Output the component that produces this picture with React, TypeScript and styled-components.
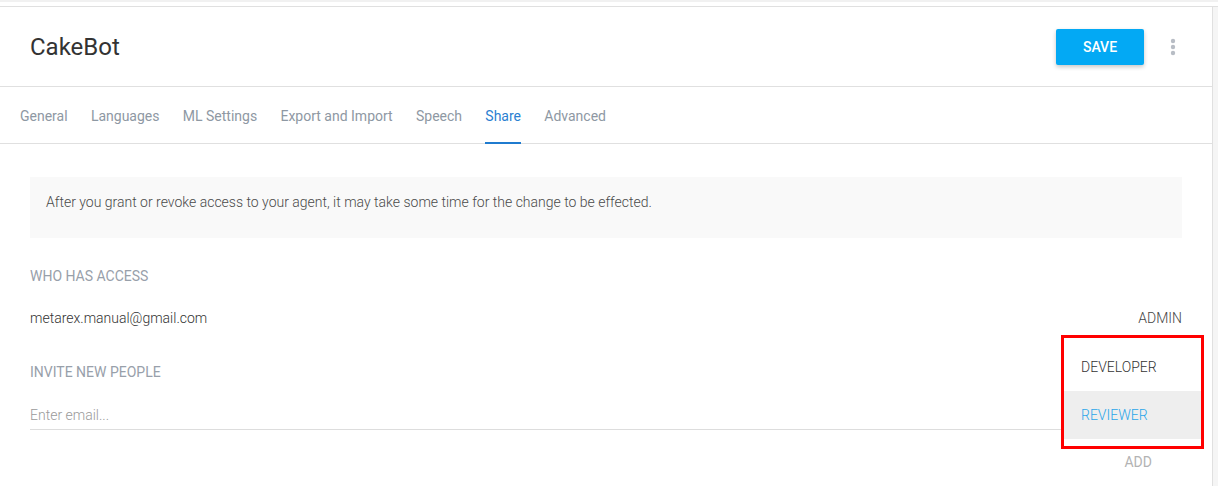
import React from "react";
import styled, { createGlobalStyle } from "styled-components";

const GlobalStyle = createGlobalStyle`
  html, body { margin: 0; padding: 0; background: #ffffff; }
  body { font-family: Roboto, "Liberation Sans", Arial, sans-serif; }
  * { box-sizing: border-box; }
`;

const Page = styled.div`
  border-top: 2px solid #f1f1f1;
  padding-top: 4px;
  background: #ffffff;
`;

const Frame = styled.div`
  display: flex;
  border-top: 1px solid #e0e0e0;
  background: #f5f5f5;
`;

const Card = styled.div`
  width: 1213px;
  background: #ffffff;
  border-right: 1px solid #e0e0e0;
  min-height: 479px;
`;

const Header = styled.header`
  height: 80px;
  display: flex;
  align-items: center;
  padding: 0 27px 0 30px;
  border-bottom: 1px solid #e0e0e0;
`;

const Title = styled.h1`
  margin: 0;
  flex: 1;
  font-size: 24px;
  font-weight: 400;
  color: #333333;
  line-height: 28px;
`;

const SaveButton = styled.button`
  width: 88px;
  height: 36px;
  border: none;
  border-radius: 2px;
  background: #03a9f4;
  color: #ffffff;
  font-family: inherit;
  font-size: 14px;
  font-weight: 500;
  box-shadow: 0 2px 4px rgba(0, 0, 0, 0.22);
  cursor: pointer;
`;

const MoreButton = styled.button`
  width: 24px;
  height: 24px;
  margin-left: 17px;
  border: none;
  background: transparent;
  padding: 0;
  display: flex;
  align-items: center;
  justify-content: center;
`;

const Tabs = styled.nav`
  height: 57px;
  display: flex;
  gap: 23.3px;
  padding-left: 20px;
  border-bottom: 1px solid #e0e0e0;
`;

const Tab = styled.div<{ $active?: boolean }>`
  height: 57px;
  display: flex;
  align-items: center;
  font-size: 14px;
  color: ${(p) => (p.$active ? "#2b7fd1" : "#8e98a3")};
  border-bottom: 2px solid ${(p) => (p.$active ? "#1f7bcf" : "transparent")};
  margin-bottom: -1px;
  padding-top: 3px;
`;

const Content = styled.section`
  position: relative;
  padding: 33px 30px 0 30px;
`;

const InfoBox = styled.div`
  height: 61px;
  background: #f9f9f9;
  padding: 15px 0 0 16px;
  font-size: 14px;
  line-height: 20px;
  font-weight: 300;
  color: #4a4a4a;
`;

const SectionLabel = styled.div<{ $top: number }>`
  margin-top: ${(p) => p.$top}px;
  font-size: 14px;
  line-height: 20px;
  color: #98a0aa;
  text-transform: uppercase;
`;

const AccessRow = styled.div`
  margin-top: 22px;
  display: flex;
  justify-content: space-between;
  font-size: 14px;
  line-height: 20px;
  font-weight: 300;
  color: #333333;
`;

const Role = styled.span`
  color: #444444;
  text-transform: uppercase;
`;

const EmailInput = styled.input`
  display: block;
  width: 100%;
  margin-top: 20px;
  height: 28px;
  padding: 0 0 2px 0;
  border: none;
  border-bottom: 1px solid #dddddd;
  font-family: inherit;
  font-size: 14px;
  font-weight: 300;
  color: #333;
  outline: none;
  &::placeholder { color: #9a9a9a; }
`;

const ActionRow = styled.div`
  display: flex;
  justify-content: flex-end;
  padding-right: 30px;
  margin-top: 22px;
`;

const AddButton = styled.button`
  border: none;
  background: transparent;
  padding: 0;
  font-family: inherit;
  font-size: 14px;
  line-height: 20px;
  color: #b3b3b3;
  text-transform: uppercase;
`;

const Highlight = styled.div`
  position: absolute;
  left: 1061px;
  top: 191px;
  width: 143px;
  height: 114px;
  border: 3px solid #ff0000;
  background: #ffffff;
`;

const Menu = styled.ul`
  list-style: none;
  margin: 0;
  padding: 5px 0 0 0;
`;

const MenuItem = styled.li<{ $selected?: boolean }>`
  height: 48px;
  display: flex;
  align-items: center;
  padding-left: 17px;
  font-size: 14px;
  font-weight: 300;
  text-transform: uppercase;
  background: ${(p) => (p.$selected ? "#eeeeee" : "#ffffff")};
  color: ${(p) => (p.$selected ? "#2ba6ea" : "#333333")};
`;

const tabs = ["General", "Languages", "ML Settings", "Export and Import", "Speech", "Share", "Advanced"];

export default function App() {
  return (
    <>
      <GlobalStyle />
      <Page>
        <Frame>
          <Card>
            <Header>
              <Title>CakeBot</Title>
              <SaveButton>SAVE</SaveButton>
              <MoreButton aria-label="More">
                <svg width="6" height="18" viewBox="0 0 6 18">
                  <circle cx="3" cy="3" r="2.2" fill="#b8bdc5" />
                  <circle cx="3" cy="9" r="2.2" fill="#b8bdc5" />
                  <circle cx="3" cy="15" r="2.2" fill="#b8bdc5" />
                </svg>
              </MoreButton>
            </Header>
            <Tabs>
              {tabs.map((t) => (
                <Tab key={t} $active={t === "Share"}>
                  {t}
                </Tab>
              ))}
            </Tabs>
            <Content>
              <InfoBox>
                After you grant or revoke access to your agent, it may take some time for the change to be effected.
              </InfoBox>
              <SectionLabel $top={28}>Who has access</SectionLabel>
              <AccessRow>
                <span>metarex.manual@gmail.com</span>
                <Role>Admin</Role>
              </AccessRow>
              <SectionLabel $top={34}>Invite new people</SectionLabel>
              <EmailInput placeholder="Enter email..." />
              <ActionRow>
                <AddButton disabled>Add</AddButton>
              </ActionRow>
              <Highlight>
                <Menu>
                  <MenuItem>Developer</MenuItem>
                  <MenuItem $selected>Reviewer</MenuItem>
                </Menu>
              </Highlight>
            </Content>
          </Card>
        </Frame>
      </Page>
    </>
  );
}
